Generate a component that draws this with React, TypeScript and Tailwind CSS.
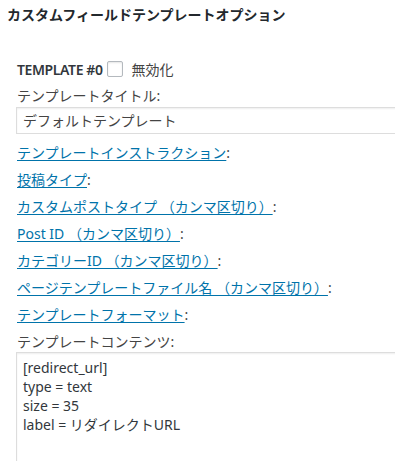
import React from 'react';

const font = { fontFamily: '"Noto Sans", "Noto Sans CJK JP", sans-serif' };

const links = [
  'テンプレートインストラクション',
  '投稿タイプ',
  'カスタムポストタイプ （カンマ区切り）',
  'Post ID （カンマ区切り）',
  'カテゴリーID （カンマ区切り）',
  'ページテンプレートファイル名 （カンマ区切り）',
  'テンプレートフォーマット',
];

export default function App() {
  return (
    <div
      className="w-[395px] h-[461px] overflow-hidden bg-white text-[14px] text-[#444]"
      style={font}
    >
      {/* Header */}
      <h2 className="pt-[6px] pl-[7px] text-[14px] leading-[18px] font-semibold text-[#23282d]">
        カスタムフィールドテンプレートオプション
      </h2>

      <div className="pl-[16px] pt-[35px]">
        {/* Template header */}
        <div className="flex items-center h-[20px] pl-[1px]">
          <span className="font-semibold tracking-[-0.4px] text-[#32373c]">TEMPLATE #0</span>
          <span className="ml-[4px] w-[16px] h-[16px] border border-[#b4b9be] rounded-[2px] bg-white shadow-[inset_0_1px_2px_rgba(0,0,0,0.1)]" />
          <span className="ml-[9px]">無効化</span>
        </div>

        <div className="h-[20px] leading-[20px] mt-[7px] pl-[1px]">テンプレートタイトル:</div>

        <div className="mt-[1px] w-[420px] h-[27px] border border-[#ddd] shadow-[inset_0_1px_2px_rgba(0,0,0,0.07)] flex items-center px-[6px]">
          デフォルトテンプレート
        </div>

        {/* Option links */}
        <div className="mt-[5px] flex flex-col pl-[1px]">
          {links.map((l) => (
            <div key={l} className="h-[27px] flex items-center">
              <a href="#" className="text-[#0073aa] underline underline-offset-[2px]">
                {l}
              </a>
              <span>:</span>
            </div>
          ))}
        </div>

        <div className="h-[20px] leading-[20px] mt-[4px] pl-[1px]">テンプレートコンテンツ:</div>

        {/* Content */}
        <div className="w-[420px] h-[200px] border border-[#ddd] shadow-[inset_0_1px_2px_rgba(0,0,0,0.07)] px-[6px] pt-[5px] leading-[19px] text-[#32373c]">
          <div>[redirect_url]</div>
          <div>type = text</div>
          <div>size = 35</div>
          <div>label = リダイレクトURL</div>
        </div>
      </div>
    </div>
  );
}
